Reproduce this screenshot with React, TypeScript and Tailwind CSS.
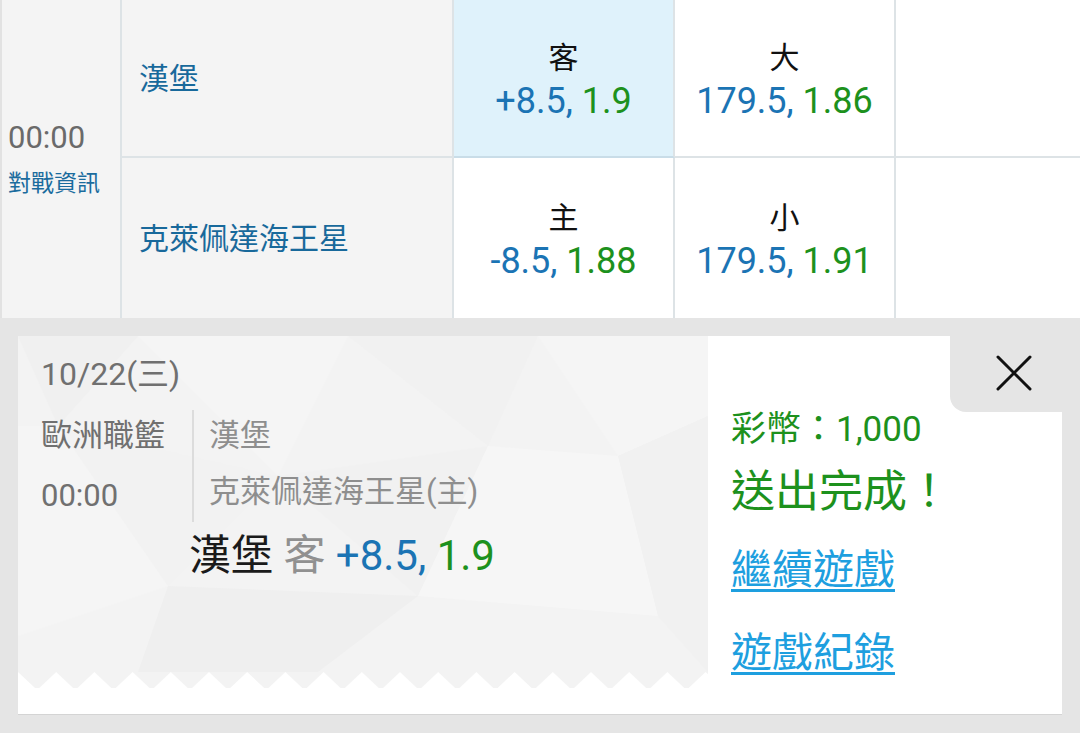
import type React from "react"

const font = "font-[Roboto,'Noto_Sans_CJK_TC',sans-serif]"

const Odds: React.FC<{ label: string; line: string; price: string; active?: boolean; top?: boolean }> = ({
  label,
  line,
  price,
  active,
  top,
}) => (
  <div
    className={`flex flex-col items-center justify-center border-r-2 border-[#dde3e6] pt-[6px] ${
      top ? (active ? "border-b-2 border-b-[#c9dde8]" : "border-b-2") : ""
    } ${active ? "bg-[#dff2fb]" : "bg-white"}`}
  >
    <div className="text-[30px] leading-[40px] text-[#111]">{label}</div>
    <div className="text-[36px] leading-[46px]">
      <span className="text-[#1b74b4]">{line}, </span>
      <span className="text-[#1d911d]">{price}</span>
    </div>
  </div>
)

function Triangles() {
  return (
    <svg className="absolute inset-0 h-full w-full" viewBox="0 0 690 336" preserveAspectRatio="none">
      <rect width="690" height="336" fill="#f3f3f3" />
      <polygon points="0,0 120,0 40,90" fill="#f0f0f0" />
      <polygon points="120,0 330,0 260,140" fill="#f5f5f5" />
      <polygon points="330,0 520,0 470,110" fill="#f1f1f1" />
      <polygon points="520,0 690,0 690,80 600,120" fill="#f5f5f5" />
      <polygon points="0,90 40,90 150,250 0,300" fill="#f5f5f5" />
      <polygon points="260,140 470,110 400,260" fill="#f1f1f1" />
      <polygon points="470,110 600,120 640,280 400,260" fill="#f6f6f6" />
      <polygon points="150,250 400,260 300,336 120,336" fill="#efefef" />
      <polygon points="600,120 690,80 690,336 640,280" fill="#f1f1f1" />
      <polygon points="40,90 260,140 150,250" fill="#f2f2f2" />
    </svg>
  )
}

function Zigzag() {
  const teeth = Array.from({ length: 19 }, (_, i) => i)
  return (
    <svg className="block h-[16px] w-full" viewBox="0 0 690 16" preserveAspectRatio="none">
      <rect width="690" height="16" fill="#f3f3f3" />
      {teeth.map((i) => {
        const x = i * 38.2
        return <polygon key={i} points={`${x - 17},16 ${x},0 ${x + 17},16`} fill="#ffffff" />
      })}
    </svg>
  )
}

export default function App() {
  return (
    <div className={`${font} w-[1080px] h-[733px] overflow-hidden bg-[#e5e5e5]`}>
      {/* match table */}
      <div className="grid grid-cols-[120px_332px_221px_221px_1fr] grid-rows-[158px_160px] border-l-2 border-[#e2e2e2] bg-white">
        <div className="row-span-2 flex flex-col justify-center border-r-2 border-[#dde3e6] bg-[#f4f4f4] pl-[6px] pt-[0px]">
          <div className="text-[31px] leading-[38px] text-[#6a6a6a]">00:00</div>
          <div className="mt-[12px] text-[23px] leading-[30px] text-[#1b6c9e]">對戰資訊</div>
        </div>
        <div className="flex items-center border-r-2 border-b-2 border-[#dde3e6] bg-[#f4f4f4] pl-[17px] text-[30px] text-[#18699b]">
          漢堡
        </div>
        <Odds label="客" line="+8.5" price="1.9" active top />
        <Odds label="大" line="179.5" price="1.86" top />
        <div className="border-b-2 border-[#dde3e6] bg-white" />
        <div className="flex items-center border-r-2 border-[#dde3e6] bg-[#f4f4f4] pl-[17px] text-[30px] text-[#18699b]">
          克萊佩達海王星
        </div>
        <Odds label="主" line="-8.5" price="1.88" />
        <Odds label="小" line="179.5" price="1.91" />
        <div className="bg-white" />
      </div>

      {/* confirmation panel */}
      <div className="px-[18px] pt-[18px]">
        <div className="flex h-[378px] shadow-[0_1px_0_#d4d4d4]">
          <div className="flex w-[690px] flex-col bg-white">
            <div className="relative h-[336px]">
              <Triangles />
              <div className="relative pl-[23px] pt-[17px]">
                <div className="text-[32px] leading-[42px] text-[#707070]">10/22(三)</div>
                <div className="mt-[15px] flex">
                  <div className="w-[153px] border-r-2 border-[#dcdcdc] text-[31px] text-[#707070]">
                    <div className="leading-[52px]">歐洲職籃</div>
                    <div className="mt-[8px] leading-[52px]">00:00</div>
                  </div>
                  <div className="pl-[15px] text-[31px] text-[#8e8e8e]">
                    <div className="leading-[52px]">漢堡</div>
                    <div className="mt-[4px] leading-[52px]">克萊佩達海王星(主)</div>
                  </div>
                </div>
                <div className="mt-[6px] pl-[148px] text-[42px] leading-[56px]">
                  <span className="text-[#1a1a1a]">漢堡 </span>
                  <span className="text-[#909090]">客 </span>
                  <span className="text-[#1b74b4]">+8.5, </span>
                  <span className="text-[#1d911d]">1.9</span>
                </div>
              </div>
            </div>
            <Zigzag />
            <div className="h-[26px] bg-white" />
          </div>
          <div className="relative flex-1 bg-white">
            <div className="absolute right-0 top-0 flex h-[76px] w-[112px] items-center justify-center rounded-bl-[16px] bg-[#e5e5e5]">
              <svg width="38" height="38" viewBox="0 0 38 38" className="mt-[-2px] ml-[15px]">
                <path d="M3 3 L35 35 M35 3 L3 35" stroke="#111" strokeWidth="3" strokeLinecap="round" />
              </svg>
            </div>
            <div className="pl-[23px] pt-[72px]">
              <div className="text-[35px] leading-[44px] text-[#1d911d]">彩幣：1,000</div>
              <div className="mt-[14px] text-[44px] leading-[52px] text-[#1d911d]">送出完成！</div>
              <div className="mt-[27px] text-[41px] leading-[50px]">
                <a className="text-[#1e9fdf] underline decoration-[3px] underline-offset-[5px]">繼續遊戲</a>
              </div>
              <div className="mt-[33px] text-[41px] leading-[50px]">
                <a className="text-[#1e9fdf] underline decoration-[3px] underline-offset-[5px]">遊戲紀錄</a>
              </div>
            </div>
          </div>
        </div>
      </div>
    </div>
  )
}
